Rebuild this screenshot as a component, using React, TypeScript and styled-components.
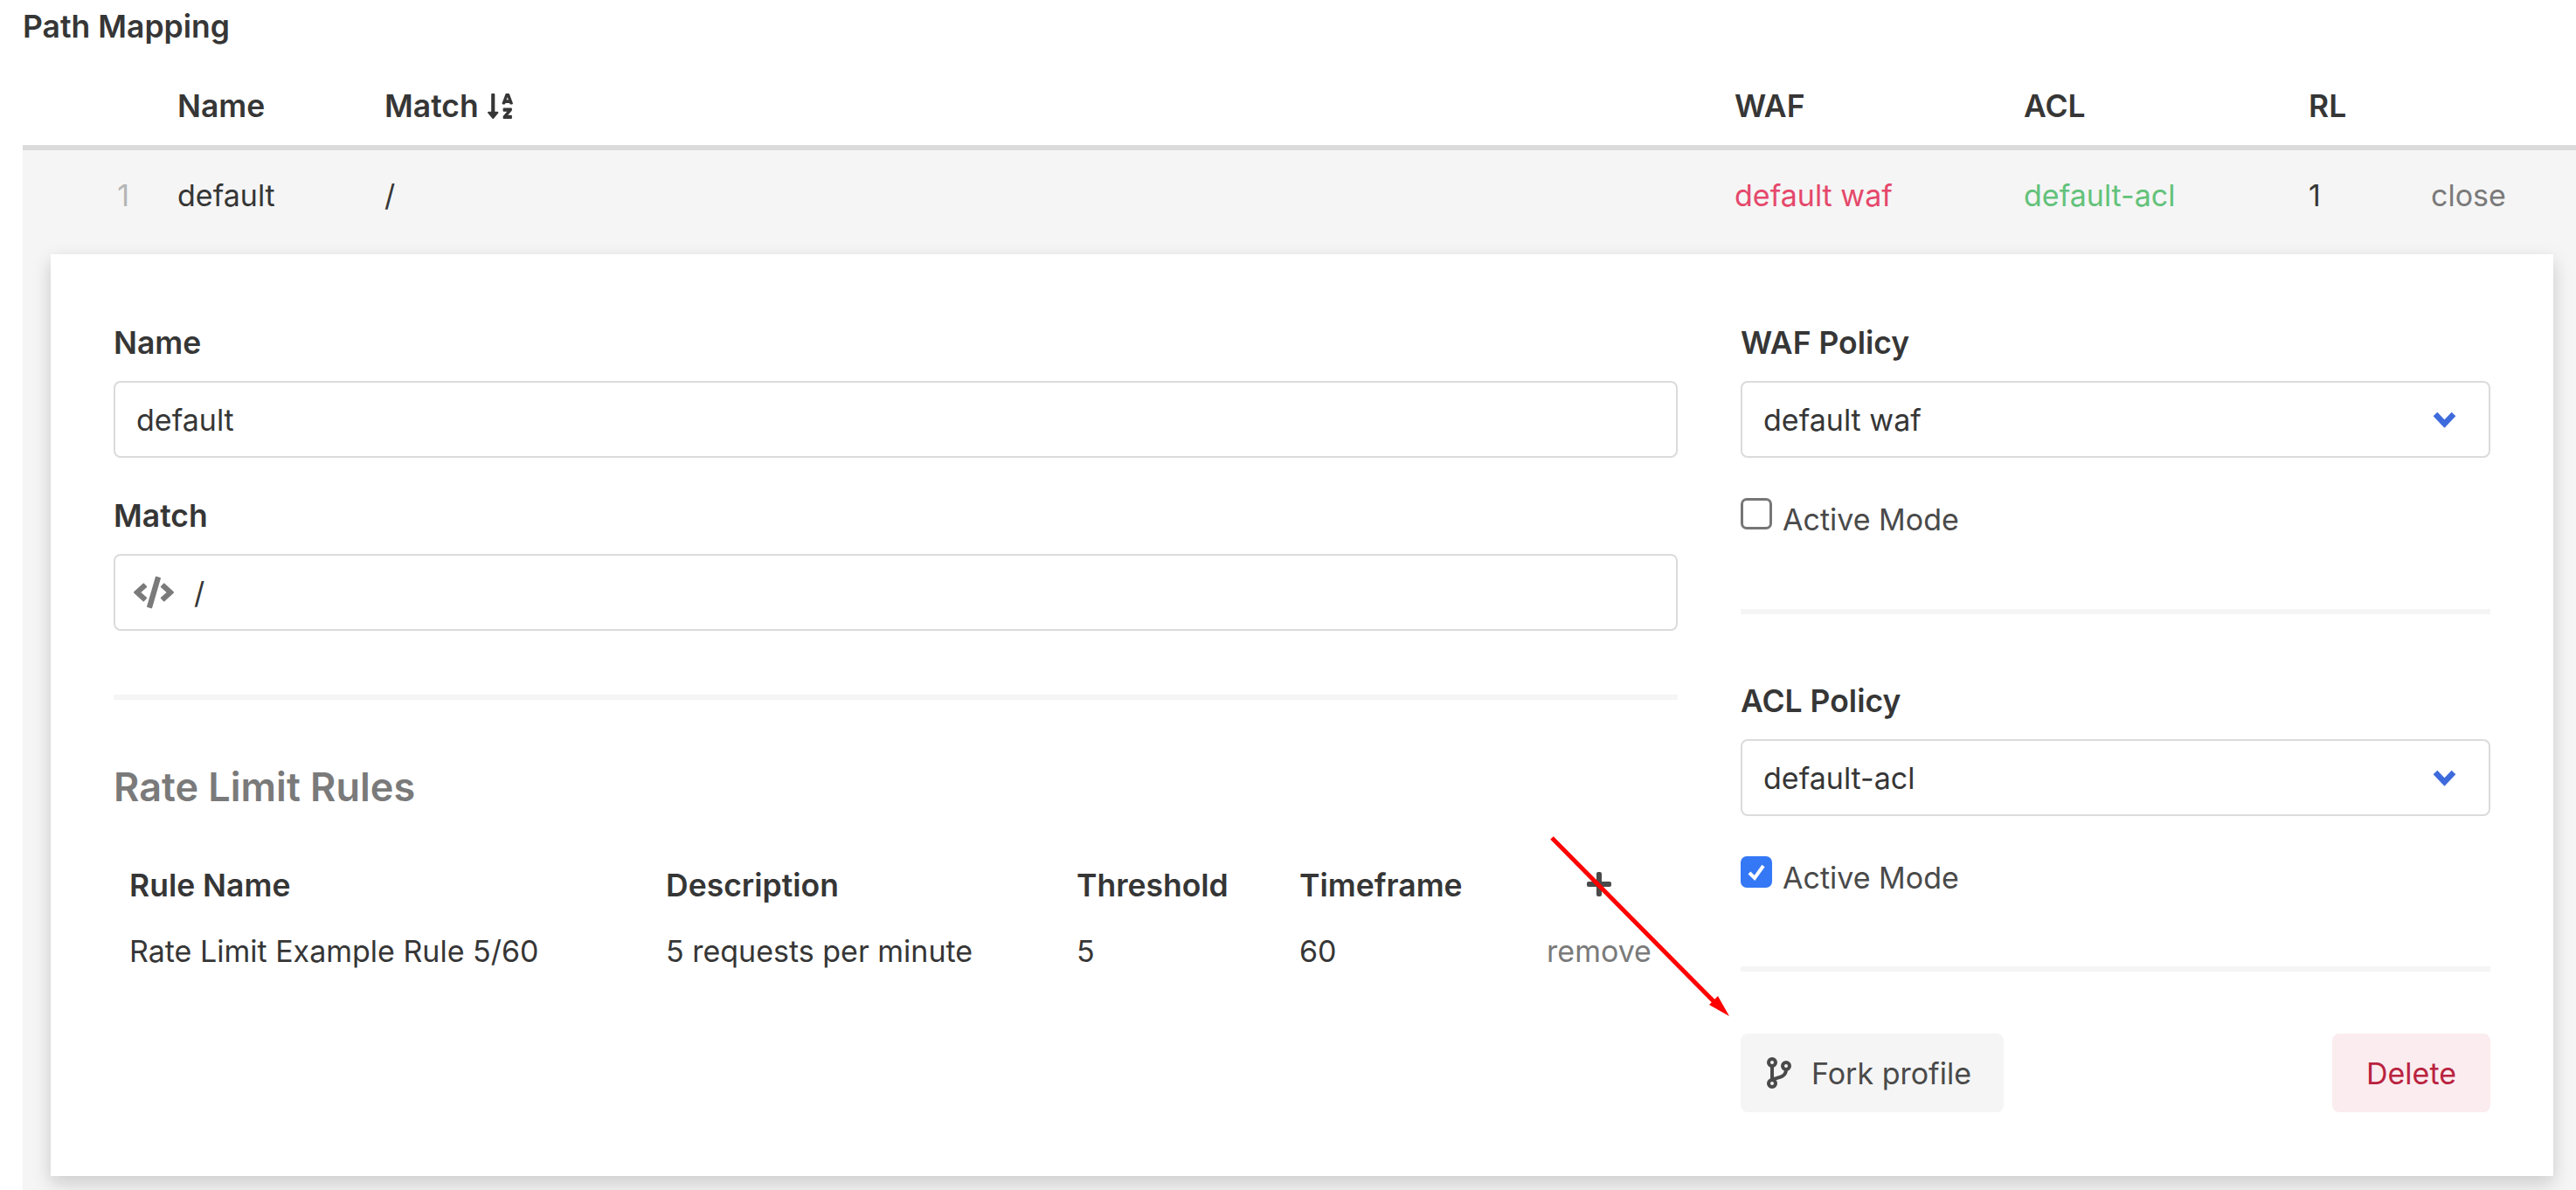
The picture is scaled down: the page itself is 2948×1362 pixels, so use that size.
import styled, { createGlobalStyle } from "styled-components";
import { FaCode, FaPlus, FaSortAlphaDown } from "react-icons/fa";

const GlobalStyle = createGlobalStyle`
  html, body {
    margin: 0;
    padding: 0;
    background: #fff;
    height: 100%;
    overflow: hidden;
  }
  body {
    font-family: Inter, "Noto Sans", sans-serif;
    font-size: 34px;
    color: #363636;
  }
`;

const Page = styled.div`
  position: relative;
  width: 2948px;
  height: 1362px;
  overflow: hidden;
`;

const Title = styled.div`
  padding: 12px 0 0 26px;
  height: 44px;
  line-height: 38px;
  font-weight: 600;
  font-size: 35.5px;
`;

const Table = styled.div`
  margin-left: 26px;
`;

const Columns = styled.div`
  display: grid;
  grid-template-columns: 177px 237px 1545px 331px 326px 140px 1fr;
  align-items: center;
`;

const HeaderRow = styled(Columns)`
  padding-top: 20px;
  height: 90px;
  border-bottom: 6px solid #dbdbdb;
  font-weight: 600;
  font-size: 35.5px;
`;

const HeaderCell = styled.div`
  display: flex;
  align-items: center;
  gap: 8px;
`;

const Expanded = styled.div`
  background: #f5f5f5;
  height: 1190px;
`;

const DataRow = styled(Columns)`
  height: 102px;
`;

const Index = styled.div`
  color: #b5b5b5;
  text-align: right;
  padding-right: 55px;
`;

const Cell = styled.div<{ $color?: string }>`
  color: ${(props) => props.$color || "#363636"};
`;

const Panel = styled.div`
  margin: 17px 26px 0 32px;
  padding: 76px 72px 0;
  height: 1055px;
  box-sizing: border-box;
  background: #fff;
  box-shadow: 0 8px 20px rgba(10, 10, 10, 0.18);
  display: grid;
  grid-template-columns: 1790px 858px;
  column-gap: 72px;
`;

const Column = styled.div`
  display: flex;
  flex-direction: column;
`;

const Label = styled.div`
  height: 48px;
  line-height: 51px;
  font-weight: 600;
  font-size: 35.5px;
  margin-bottom: 21px;
`;

const Input = styled.div`
  height: 88px;
  box-sizing: border-box;
  border: 2px solid #dbdbdb;
  border-radius: 8px;
  padding: 0 24px;
  display: flex;
  align-items: center;
  justify-content: space-between;
  margin-bottom: 41px;
`;

const CodeInput = styled(Input)`
  justify-content: flex-start;
  padding-left: 21px;
  gap: 23px;
  svg {
    color: #7a7a7a;
  }
`;

const Divider = styled.div<{ $top: number; $bottom: number }>`
  height: 6px;
  background: #f5f5f5;
  margin-top: ${(props) => props.$top}px;
  margin-bottom: ${(props) => props.$bottom}px;
`;

const SectionTitle = styled.div`
  font-size: 45px;
  line-height: 56px;
  font-weight: 600;
  color: #7a7a7a;
  margin-bottom: 47px;
`;

const RulesGrid = styled.div`
  display: grid;
  grid-template-columns: 614px 470px 255px 283px 120px;
  padding-left: 18px;
  align-items: center;
  grid-auto-rows: 75px;
`;

const RuleHead = styled.div`
  font-weight: 600;
  font-size: 35.5px;
`;

const RuleAction = styled.div`
  display: flex;
  justify-content: center;
  color: #7a7a7a;
  svg {
    color: #4a4a4a;
    margin-top: -4px;
  }
`;

const CheckRow = styled.div`
  display: flex;
  align-items: flex-start;
  gap: 12px;
  color: #4a4a4a;
  margin-top: 5px;
`;

const CheckBox = styled.span<{ $checked?: boolean }>`
  width: 36px;
  height: 36px;
  box-sizing: border-box;
  border-radius: 7px;
  border: ${(props) => (props.$checked ? "none" : "3px solid #767676")};
  background: ${(props) => (props.$checked ? "#3478f6" : "#fff")};
  display: flex;
  align-items: center;
  justify-content: center;
`;

const CheckLabel = styled.span`
  line-height: 48px;
  margin-top: 1px;
`;

const Actions = styled.div`
  display: flex;
  justify-content: space-between;
`;

const Button = styled.div<{ $danger?: boolean }>`
  height: 90px;
  box-sizing: border-box;
  border-radius: 8px;
  display: flex;
  align-items: center;
  gap: 23px;
  padding: 0 37px 0 30px;
  background: ${(props) => (props.$danger ? "#fbecef" : "#f5f5f5")};
  color: ${(props) => (props.$danger ? "#b9233f" : "#4a4a4a")};
`;

const DeleteButton = styled(Button)`
  padding: 0 39px;
`;

const SelectArrow = styled.svg`
  margin-right: 13px;
`;

const ArrowOverlay = styled.svg`
  position: absolute;
  left: 0;
  top: 0;
  pointer-events: none;
`;

function ForkIcon() {
  return (
    <svg width="28" height="36" viewBox="0 0 28 36" fill="none" stroke="#4a4a4a" strokeWidth="4" strokeLinecap="round">
      <circle cx="6" cy="6" r="4" />
      <circle cx="6" cy="30" r="4" />
      <circle cx="22" cy="10" r="4" />
      <path d="M6 10V26" />
      <path d="M22 14C22 21 17 23 7 25" />
    </svg>
  );
}

function Chevron() {
  return (
    <SelectArrow width="27" height="20" viewBox="0 0 27 20" fill="none" stroke="#3e6bdc" strokeWidth="6.5">
      <path d="M3 4L13.5 15L24 4" />
    </SelectArrow>
  );
}

function Tick() {
  return (
    <svg width="24" height="24" viewBox="0 0 24 24" fill="none" stroke="#fff" strokeWidth="4">
      <path d="M4 13L10 19L20 5" />
    </svg>
  );
}

export default function App() {
  return (
    <Page>
      <GlobalStyle />
      <Title>Path Mapping</Title>
      <Table>
        <HeaderRow>
          <div />
          <HeaderCell>Name</HeaderCell>
          <HeaderCell>
            Match <FaSortAlphaDown size={33} />
          </HeaderCell>
          <HeaderCell>WAF</HeaderCell>
          <HeaderCell>ACL</HeaderCell>
          <HeaderCell>RL</HeaderCell>
          <div />
        </HeaderRow>
        <Expanded>
          <DataRow>
            <Index>1</Index>
            <Cell>default</Cell>
            <Cell>/</Cell>
            <Cell $color="#e5486b">default waf</Cell>
            <Cell $color="#63c27a">default-acl</Cell>
            <Cell>1</Cell>
            <Cell $color="#7a7a7a">close</Cell>
          </DataRow>
          <Panel>
            <Column>
              <Label>Name</Label>
              <Input>default</Input>
              <Label>Match</Label>
              <CodeInput>
                <FaCode size={46} />/
              </CodeInput>
              <Divider $top={32} $bottom={72} />
              <SectionTitle>Rate Limit Rules</SectionTitle>
              <RulesGrid>
                <RuleHead>Rule Name</RuleHead>
                <RuleHead>Description</RuleHead>
                <RuleHead>Threshold</RuleHead>
                <RuleHead>Timeframe</RuleHead>
                <RuleAction>
                  <FaPlus size={32} />
                </RuleAction>
                <div>Rate Limit Example Rule 5/60</div>
                <div>5 requests per minute</div>
                <div>5</div>
                <div>60</div>
                <RuleAction>remove</RuleAction>
              </RulesGrid>
            </Column>
            <Column>
              <Label>WAF Policy</Label>
              <Input>
                default waf
                <Chevron />
              </Input>
              <CheckRow>
                <CheckBox />
                <CheckLabel>Active Mode</CheckLabel>
              </CheckRow>
              <Divider $top={78} $bottom={74} />
              <Label>ACL Policy</Label>
              <Input>
                default-acl
                <Chevron />
              </Input>
              <CheckRow>
                <CheckBox $checked>
                  <Tick />
                </CheckBox>
                <CheckLabel>Active Mode</CheckLabel>
              </CheckRow>
              <Divider $top={77} $bottom={71} />
              <Actions>
                <Button>
                  <ForkIcon />
                  Fork profile
                </Button>
                <DeleteButton $danger>Delete</DeleteButton>
              </Actions>
            </Column>
          </Panel>
        </Expanded>
      </Table>
      <ArrowOverlay width="2948" height="1362" viewBox="0 0 2948 1362">
        <path d="M1776 959L1968 1153" stroke="#f00" strokeWidth="5" fill="none" />
        <path d="M1979 1163L1956 1150L1966 1140Z" fill="#f00" />
      </ArrowOverlay>
    </Page>
  );
}
